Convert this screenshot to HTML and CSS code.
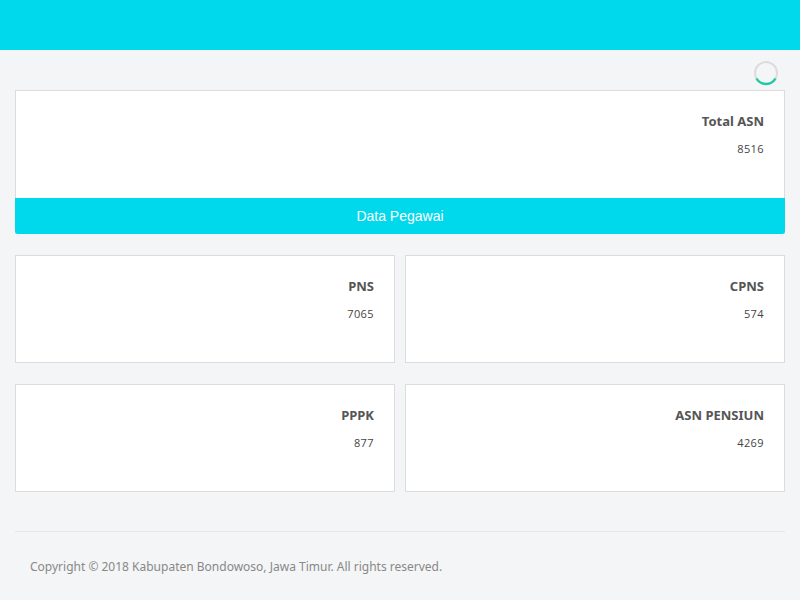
FILE: index.html
```html
<!DOCTYPE html>
<html>
<head>
<meta charset="utf-8">
<link rel="stylesheet" href="styles.css">
</head>
<body>
<header class="topbar"></header>
<main class="content">
  <div class="loader-row">
    <svg class="spinner" width="26" height="26" viewBox="0 0 26 26">
      <circle cx="13" cy="13" r="11" fill="none" stroke="#dcdcdc" stroke-width="2"/>
      <path d="M3.5 18.5 A11 11 0 0 0 22.5 18.5" fill="none" stroke="#1ccaa8" stroke-width="2.4"/>
    </svg>
  </div>
  <section class="card card-main">
    <div class="card-body">
      <div class="card-title">Total ASN</div>
      <div class="card-value">8516</div>
    </div>
    <div class="card-button">Data Pegawai</div>
  </section>
  <div class="grid">
    <section class="card"><div class="card-body"><div class="card-title">PNS</div><div class="card-value">7065</div></div></section>
    <section class="card"><div class="card-body"><div class="card-title">CPNS</div><div class="card-value">574</div></div></section>
    <section class="card"><div class="card-body"><div class="card-title">PPPK</div><div class="card-value">877</div></div></section>
    <section class="card"><div class="card-body"><div class="card-title">ASN PENSIUN</div><div class="card-value">4269</div></div></section>
  </div>
  <footer class="footer">Copyright © 2018 Kabupaten Bondowoso, Jawa Timur. All rights reserved.</footer>
</main>
</body>
</html>
```
FILE: styles.css
```css
html, body { margin: 0; padding: 0; }
body {
  background: #f4f5f7;
  font-family: "Noto Sans", "Open Sans", sans-serif;
  width: 800px;
  height: 600px;
  overflow: hidden;
}
.topbar {
  height: 50px;
  background: #00d8ec;
}
.content {
  padding: 0 15px;
}
.loader-row {
  height: 40px;
  display: flex;
  justify-content: flex-end;
  align-items: center;
  padding-right: 6px;
}
.spinner { display: block; margin-top: 6px; }
.card {
  background: #fff;
  border: 1px solid #dcdcdc;
  box-sizing: border-box;
}
.card-body {
  height: 106px;
  box-sizing: border-box;
  padding: 21px 20px 0 20px;
  text-align: right;
}
.card-title {
  font-size: 13px;
  font-weight: 700;
  color: #555;
  line-height: 18px;
}
.card-value {
  margin-top: 12px;
  font-family: "Open Sans", sans-serif;
  font-size: 11px;
  color: #444;
  line-height: 14px;
  letter-spacing: 0.4px;
}
.card-main .card-body { height: 107px; }
.card-button {
  height: 36px;
  background: #00d8ec;
  color: #fff;
  font-family: "Liberation Sans", Arial, sans-serif;
  font-size: 14px;
  display: flex;
  align-items: center;
  justify-content: center;
  border-radius: 0 0 3px 3px;
  margin: 0 -1px -1px -1px;
}
.grid {
  margin-top: 21px;
  display: grid;
  grid-template-columns: 1fr 1fr;
  column-gap: 10px;
  row-gap: 21px;
}
.grid .card { height: 108px; }
.footer {
  margin-top: 39px;
  border-top: 1px solid #e6e7e9;
  padding: 27px 15px 0 15px;
  font-size: 12px;
  color: #888;
  line-height: 16px;
  letter-spacing: 0;
}
```
